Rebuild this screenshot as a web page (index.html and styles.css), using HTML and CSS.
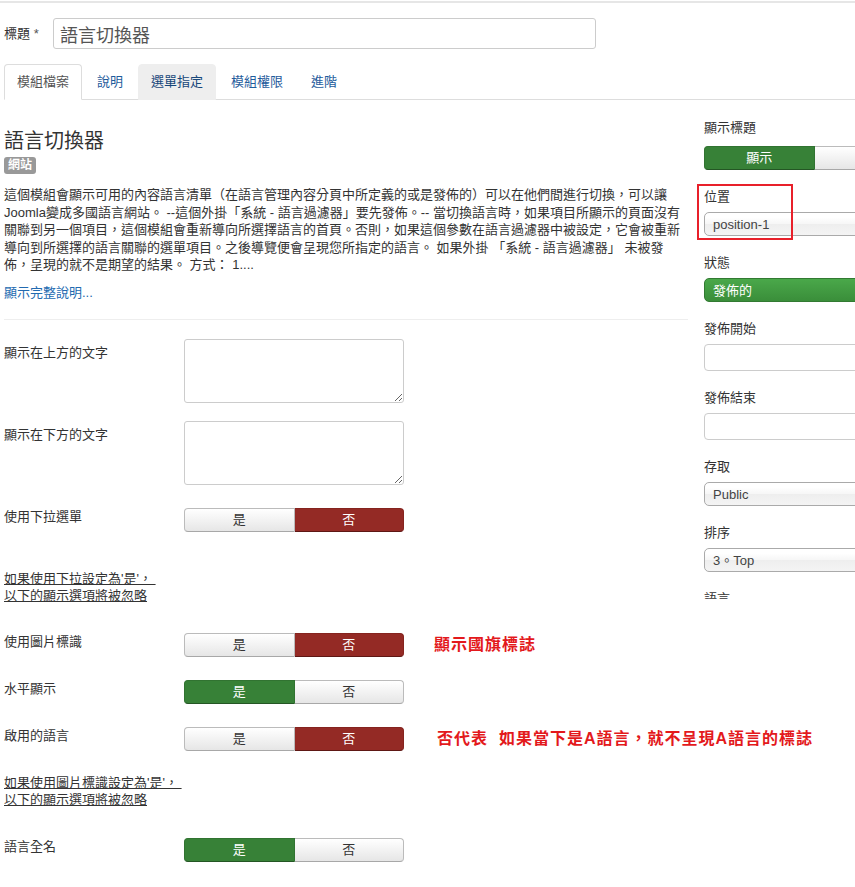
FILE: index.html
```html
<!DOCTYPE html>
<html lang="zh-Hant">
<head>
  <meta charset="UTF-8">
  <title>語言切換器 – 模組</title>
  <link rel="stylesheet" href="styles.css">
</head>
<body>

  <div class="topline"></div>

  <div class="page">
    <div class="title-row">
      <label class="title-label">標題 <span class="star">*</span></label>
      <input class="title-input" type="text" value="語言切換器">
    </div>

    <ul class="tabs">
      <li class="active"><a href="#">模組檔案</a></li>
      <li><a href="#">說明</a></li>
      <li class="hover"><a href="#">選單指定</a></li>
      <li><a href="#">模組權限</a></li>
      <li><a href="#">進階</a></li>
    </ul>

    <div class="layout">
      <!-- 左邊：模組內容 -->
      <div class="main">
        <h2 class="mod-title">語言切換器</h2>
        <span class="badge">網站</span>
        <p class="desc">
          這個模組會顯示可用的內容語言清單（在語言管理內容分頁中所定義的或是發佈的）可以在他們間進行切換，可以讓<br>
          Joomla變成多國語言網站。 --這個外掛「系統 - 語言過濾器」要先發佈。-- 當切換語言時，如果項目所顯示的頁面沒有<br>
          關聯到另一個項目，這個模組會重新導向所選擇語言的首頁。否則，如果這個參數在語言過濾器中被設定，它會被重新<br>
          導向到所選擇的語言關聯的選單項目。之後導覽便會呈現您所指定的語言。 如果外掛 「系統 - 語言過濾器」 未被發<br>
          佈，呈現的就不是期望的結果。 方式： 1....
        </p>
        <a class="more" href="#">顯示完整說明...</a>
        <hr class="sep">

        <div class="control-group">
          <label class="control-label">顯示在上方的文字</label>
          <textarea class="area"></textarea>
        </div>

        <div class="control-group">
          <label class="control-label">顯示在下方的文字</label>
          <textarea class="area"></textarea>
        </div>

        <div class="control-group">
          <label class="control-label">使用下拉選單</label>
          <div class="toggle">
            <span class="opt">是</span>
            <span class="opt red">否</span>
          </div>
        </div>

        <div class="control-group spacer spacer-first">
          <span class="note">如果使用下拉設定為'是'，&nbsp;<br>以下的顯示選項將被忽略</span>
        </div>

        <div class="control-group">
          <label class="control-label">使用圖片標識</label>
          <div class="toggle">
            <span class="opt">是</span>
            <span class="opt red">否</span>
          </div>
          <span class="remark">顯示國旗標誌</span>
        </div>

        <div class="control-group">
          <label class="control-label">水平顯示</label>
          <div class="toggle">
            <span class="opt green">是</span>
            <span class="opt">否</span>
          </div>
        </div>

        <div class="control-group">
          <label class="control-label">啟用的語言</label>
          <div class="toggle">
            <span class="opt">是</span>
            <span class="opt red">否</span>
          </div>
          <span class="remark remark-wide">否代表&nbsp;&nbsp;如果當下是A語言，就不呈現A語言的標誌</span>
        </div>

        <div class="control-group spacer">
          <span class="note">如果使用圖片標識設定為'是'，&nbsp;<br>以下的顯示選項將被忽略</span>
        </div>

        <div class="control-group">
          <label class="control-label">語言全名</label>
          <div class="toggle">
            <span class="opt green">是</span>
            <span class="opt">否</span>
          </div>
        </div>
      </div>

      <!-- 右邊：模組設定 -->
      <div class="sidebar">
        <div class="highlight"></div>

        <div class="side-group">
          <div class="side-label">顯示標題</div>
          <div class="toggle toggle-side">
            <span class="opt green">顯示</span>
            <span class="opt">隱藏</span>
          </div>
        </div>

        <div class="side-group">
          <div class="side-label">位置</div>
          <select class="select"><option>position-1</option></select>
        </div>

        <div class="side-group">
          <div class="side-label">狀態</div>
          <select class="select select-green"><option>發佈的</option></select>
        </div>

        <div class="side-group">
          <div class="side-label">發佈開始</div>
          <input class="date" type="text">
        </div>

        <div class="side-group">
          <div class="side-label">發佈結束</div>
          <input class="date" type="text">
        </div>

        <div class="side-group">
          <div class="side-label">存取</div>
          <select class="select"><option>Public</option></select>
        </div>

        <div class="side-group">
          <div class="side-label">排序</div>
          <select class="select"><option>3。Top</option></select>
        </div>

        <div class="side-group">
          <div class="side-label">語言</div>
          <select class="select"><option>全部</option></select>
        </div>
      </div>
    </div>
  </div>

</body>
</html>
```

FILE: styles.css
```css
body {
  margin: 0;
  font-family: "Liberation Sans", "Noto Sans CJK TC", sans-serif;
  font-size: 13px;
  color: #333;
  background: #fff;
  overflow: hidden;
}

.topline {
  height: 2px;
  margin-top: 1px;
  background: #e6e6e6;
}

.page {
  padding-left: 4px;
}

/* 標題 */
.title-row {
  display: flex;
  align-items: center;
  margin-top: 15px;
}

.title-label {
  width: 49px;
  line-height: 18px;
}

.star {
  color: #555;
}

.title-input {
  box-sizing: border-box;
  width: 543px;
  height: 31px;
  margin: 0;
  padding: 0 6px;
  border: 1px solid #ccc;
  border-radius: 3px;
  font-family: inherit;
  font-size: 18px;
  color: #555;
}

/* 分頁 */
.tabs {
  display: flex;
  list-style: none;
  margin: 15px 0 0;
  padding: 0;
  border-bottom: 1px solid #ddd;
}

.tabs li {
  margin: 0 2px -1px 0;
}

.tabs a {
  display: block;
  padding: 8px 12px;
  line-height: 18px;
  border: 1px solid transparent;
  border-radius: 4px 4px 0 0;
  color: #1f5c9c;
  text-decoration: none;
}

.tabs .active a {
  background: #fff;
  border-color: #ddd #ddd transparent;
  color: #555;
}

.tabs .hover a {
  background: #eee;
  border-color: #eee;
  color: #17477a;
}

.layout {
  display: flex;
  align-items: flex-start;
}

/* 左欄 */
.main {
  width: 686px;
  flex: none;
}

.mod-title {
  margin: 29px 0 0;
  font-size: 20px;
  line-height: 24px;
  font-weight: normal;
  color: #333;
}

.badge {
  display: block;
  width: fit-content;
  margin-top: 4px;
  padding: 0 4px;
  background: #999;
  color: #fff;
  font-size: 12px;
  font-weight: bold;
  line-height: 17px;
  border-radius: 3px;
}

.desc {
  margin: 12px 0 0;
  line-height: 17.5px;
  white-space: nowrap;
}

.more {
  display: block;
  margin-top: 10px;
  line-height: 17.5px;
  color: #226ab0;
  text-decoration: none;
}

.sep {
  width: 684px;
  margin: 18px 0 19px;
  border: 0;
  border-top: 1px solid #eee;
}

.control-group {
  display: flex;
  align-items: flex-start;
  margin-bottom: 18px;
}

.control-label {
  width: 180px;
  flex: none;
  padding-top: 5px;
  line-height: 18px;
}

.area {
  box-sizing: border-box;
  width: 220px;
  height: 64px;
  margin: 0;
  border: 1px solid #ccc;
  border-radius: 3px;
}

.toggle {
  display: flex;
  flex: none;
  width: 220px;
  height: 24px;
  margin-top: 5px;
}

.opt {
  flex: 1;
  box-sizing: border-box;
  line-height: 22px;
  text-align: center;
  border: 1px solid #bbb;
  border-bottom-color: #a8a8a8;
  background: linear-gradient(#fff, #e6e6e6);
  color: #333;
}

.opt:first-child {
  border-radius: 4px 0 0 4px;
}

.opt:last-child {
  border-radius: 0 4px 4px 0;
  border-left: 0;
}

.opt.red {
  background: #942a25;
  border-color: #85241f #85241f #5e1714;
  color: #fff;
}

.opt.green {
  background: #378137;
  border-color: #317331 #317331 #245624;
  color: #fff;
}

.remark {
  margin: 7px 0 0 30px;
  color: #e3191c;
  font-size: 16px;
  font-weight: bold;
  line-height: 20px;
  letter-spacing: 1px;
  white-space: nowrap;
}

.remark-wide {
  margin-left: 33px;
}

.spacer {
  padding: 5px 0 7px;
}

.spacer-first {
  padding: 20px 0 6px;
}

.note {
  line-height: 17px;
  text-decoration: underline;
}

/* 右欄 */
.sidebar {
  position: relative;
  flex: none;
  width: 240px;
  height: 481px;
  margin-left: 6px;
  padding: 19px 0 0 8px;
  overflow: hidden;
}

.highlight {
  position: absolute;
  top: 84px;
  left: 1px;
  width: 92px;
  height: 52px;
  border: 2px solid #e8202a;
}

.side-group {
  margin-bottom: 18px;
}

.side-label {
  line-height: 18px;
  margin-bottom: 6px;
}

/* 與上方標籤的 margin 會合併，所以取較大值 */
.toggle-side {
  margin-top: 9px;
}

.select {
  display: block;
  box-sizing: border-box;
  width: 220px;
  height: 24px;
  margin: 0;
  padding: 0 8px;
  border: 1px solid #aaa;
  border-radius: 5px;
  appearance: none;
  -webkit-appearance: none;
  background: linear-gradient(#fff 20%, #f6f6f6 50%, #eee 52%, #f4f4f4);
  font-family: inherit;
  font-size: 13px;
  color: #444;
}

.select-green {
  background: linear-gradient(#4aa84a, #3a8e3a);
  border-color: #327a32;
  color: #fff;
}

.date {
  display: block;
  box-sizing: border-box;
  width: 220px;
  height: 27px;
  margin: 0;
  border: 1px solid #ccc;
  border-radius: 4px;
}
```
